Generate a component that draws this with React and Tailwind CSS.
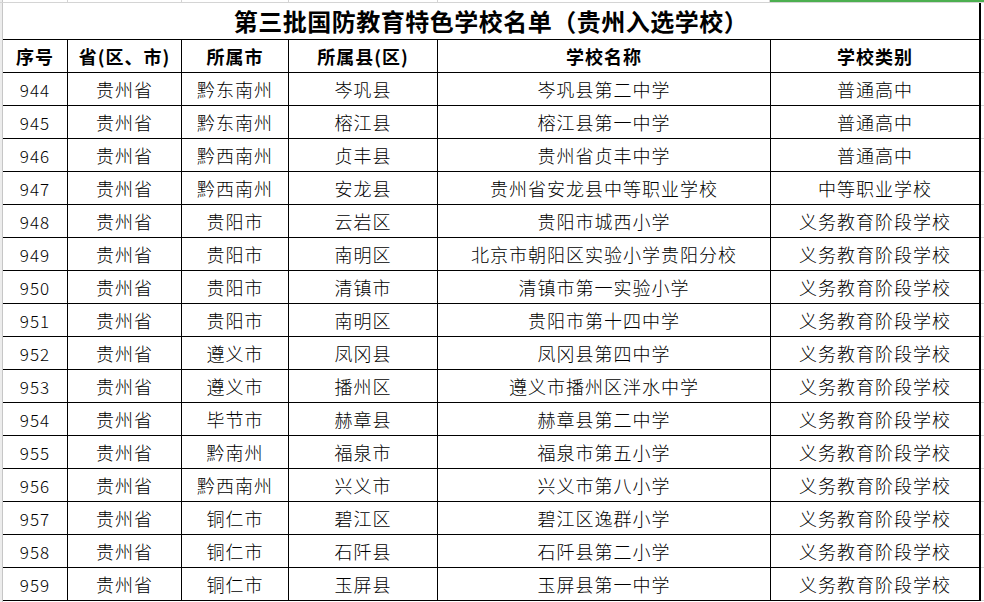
import React from "react";

const rows = [
  ["944", "贵州省", "黔东南州", "岑巩县", "岑巩县第二中学", "普通高中"],
  ["945", "贵州省", "黔东南州", "榕江县", "榕江县第一中学", "普通高中"],
  ["946", "贵州省", "黔西南州", "贞丰县", "贵州省贞丰中学", "普通高中"],
  ["947", "贵州省", "黔西南州", "安龙县", "贵州省安龙县中等职业学校", "中等职业学校"],
  ["948", "贵州省", "贵阳市", "云岩区", "贵阳市城西小学", "义务教育阶段学校"],
  ["949", "贵州省", "贵阳市", "南明区", "北京市朝阳区实验小学贵阳分校", "义务教育阶段学校"],
  ["950", "贵州省", "贵阳市", "清镇市", "清镇市第一实验小学", "义务教育阶段学校"],
  ["951", "贵州省", "贵阳市", "南明区", "贵阳市第十四中学", "义务教育阶段学校"],
  ["952", "贵州省", "遵义市", "凤冈县", "凤冈县第四中学", "义务教育阶段学校"],
  ["953", "贵州省", "遵义市", "播州区", "遵义市播州区泮水中学", "义务教育阶段学校"],
  ["954", "贵州省", "毕节市", "赫章县", "赫章县第二中学", "义务教育阶段学校"],
  ["955", "贵州省", "黔南州", "福泉市", "福泉市第五小学", "义务教育阶段学校"],
  ["956", "贵州省", "黔西南州", "兴义市", "兴义市第八小学", "义务教育阶段学校"],
  ["957", "贵州省", "铜仁市", "碧江区", "碧江区逸群小学", "义务教育阶段学校"],
  ["958", "贵州省", "铜仁市", "石阡县", "石阡县第二小学", "义务教育阶段学校"],
  ["959", "贵州省", "铜仁市", "玉屏县", "玉屏县第一中学", "义务教育阶段学校"],
];

const headers = ["序号", "省(区、市)", "所属市", "所属县(区)", "学校名称", "学校类别"];

const font = { fontFamily: '"Noto Sans CJK SC", "Noto Sans", sans-serif' };

export default function App() {
  return (
    <div
      className="w-[984px] h-[602px] bg-white overflow-hidden flex flex-col text-black"
      style={font}
    >
      {/* top gridline strip */}
      <div className="h-[3px] flex shrink-0 border-b border-[#d4d4d4]">
        <div className="w-[3px] bg-[#ececec] border-r border-[#c6c6c6]" />
        <div className="w-[65px] border-r border-[#d4d4d4]" />
        <div className="w-[114px] border-r border-[#d4d4d4]" />
        <div className="w-[107px] border-r border-[#d4d4d4]" />
        <div className="w-[149px] border-r border-[#d4d4d4]" />
        <div className="w-[332px] border-r border-[#d4d4d4]" />
        <div className="flex-1 h-[2px] bg-[#4caf50]" />
      </div>
      <div className="flex flex-1">
        {/* left strip */}
        <div className="w-[3px] shrink-0 bg-[#ececec] border-r border-[#c6c6c6]" />
        {/* table */}
        <div className="w-[978px] shrink-0 flex flex-col">
          <div className="h-[37px] border-b border-r-2 border-black flex items-center justify-center text-[24px] font-bold tracking-[0.5px] leading-none">
            第三批国防教育特色学校名单（贵州入选学校）
          </div>
          <div className="grid grid-cols-[65px_114px_107px_149px_333px_210px] h-[33px]">
            {headers.map((h, i) => (
              <div
                key={i}
                className={`flex items-center justify-center border-b border-black text-[18px] font-bold tracking-[1px] leading-none ${
                  i === 5 ? "border-r-2" : "border-r"
                }`}
              >
                {h}
              </div>
            ))}
          </div>
          {rows.map((r, ri) => (
            <div
              key={ri}
              className="grid grid-cols-[65px_114px_107px_149px_333px_210px] h-[33px]"
            >
              {r.map((c, i) => (
                <div
                  key={i}
                  className={`flex items-center justify-center border-b border-black leading-none font-light ${
                    i === 0 ? "text-[17px] tracking-[1px]" : "text-[18px] tracking-[1px]"
                  } ${i === 5 ? "border-r-2" : "border-r"}`}
                >
                  {c}
                </div>
              ))}
            </div>
          ))}
        </div>
        {/* right strip */}
        <div className="flex-1 flex flex-col">
          <div className="h-[37px] border-b border-[#d4d4d4]" />
          {Array.from({ length: 17 }).map((_, i) => (
            <div key={i} className="h-[33px] border-b border-[#d4d4d4]" />
          ))}
        </div>
      </div>
    </div>
  );
}
